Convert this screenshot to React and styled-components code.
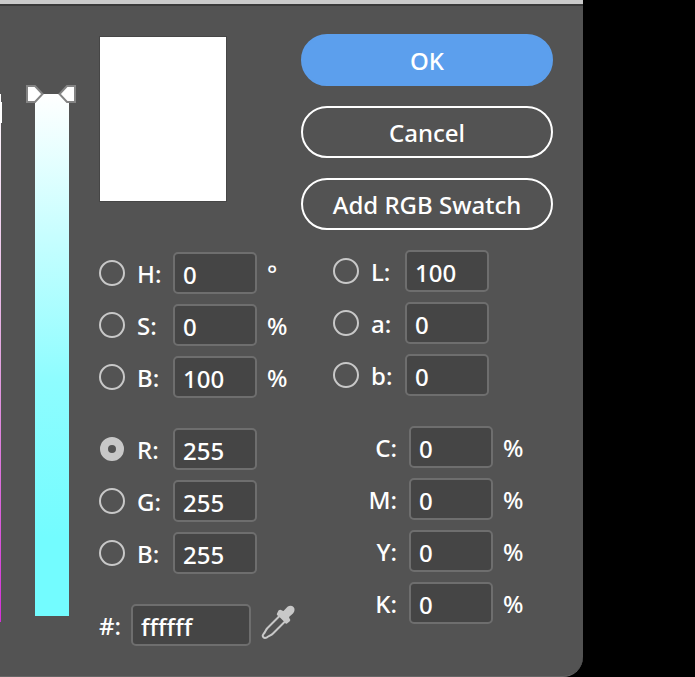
import { useState } from "react";
import styled, { createGlobalStyle } from "styled-components";

const HSB = [
  { id: "hue", label: "H:", value: "0", unit: "°" },
  { id: "saturation", label: "S:", value: "0", unit: "%" },
  { id: "brightness", label: "B:", value: "100", unit: "%" },
];

const RGB = [
  { id: "red", label: "R:", value: "255" },
  { id: "green", label: "G:", value: "255" },
  { id: "blue", label: "B:", value: "255" },
];

const LAB = [
  { id: "lightness", label: "L:", value: "100" },
  { id: "lab-a", label: "a:", value: "0" },
  { id: "lab-b", label: "b:", value: "0" },
];

const CMYK = [
  { id: "cyan", label: "C:", value: "0", unit: "%" },
  { id: "magenta", label: "M:", value: "0", unit: "%" },
  { id: "yellow", label: "Y:", value: "0", unit: "%" },
  { id: "black", label: "K:", value: "0", unit: "%" },
];

const RadioFields = ({ fields, channel, setChannel, narrow }) => (
  <Group>
    {fields.map((field) => (
      <RadioRow key={field.id} $narrow={narrow}>
        <Radio
          type="radio"
          name="channel"
          id={`${field.id}-radio`}
          aria-label={field.id}
          checked={channel === field.id}
          onChange={() => setChannel(field.id)}
        />
        <Label htmlFor={field.id}>{field.label}</Label>
        <TextInput id={field.id} defaultValue={field.value} />
        {field.unit && <Unit>{field.unit}</Unit>}
      </RadioRow>
    ))}
  </Group>
);

const Handle = () => (
  <svg width="18" height="18" viewBox="0 0 18 18">
    <path
      d="M1 1H9L16.500 9L9 17H1Z"
      fill="#fff"
      stroke="#848484"
      strokeWidth="2"
    />
  </svg>
);

const Eyedropper = () => (
  <svg width="34" height="34" viewBox="0 0 34 34">
    <path
      d="M18.500 11L6.500 23C4.500 25 4.500 27 2.500 29C.5 31.500 3 34 6 32.300C8 30.500 10 30.500 12 28.500L24 16.500"
      fill="none"
      stroke="#c8c8c8"
      strokeWidth="2"
    />
    <path
      d="M17.500 5.500C18.500 4.500 20 4.500 21 5.500L22.500 6L26.500 1.800C28.500 .3 31 .5 32.500 2C34 3.500 34 6.500 32 8.500L28 12L28.500 13.500C29.500 14.500 29.500 15.500 28.500 16.500L26 18.500C25 19 24 18.500 23.500 17L17.500 11C16 10.500 15.500 9.500 16 8.500Z"
      fill="#c8c8c8"
    />
  </svg>
);

const App = () => {
  const [channel, setChannel] = useState("red");

  return (
    <>
      <GlobalStyle />
      <Dialog>
        <ColorField>
          <FieldMarker />
        </ColorField>
        <Slider>
          <Handles>
            <Handle />
            <Handle />
          </Handles>
        </Slider>
        <LeftColumn>
          <Swatch />
          <RadioFields fields={HSB} channel={channel} setChannel={setChannel} />
          <RadioFields fields={RGB} channel={channel} setChannel={setChannel} />
          <HexRow>
            <Label htmlFor="hex">#:</Label>
            <TextInput id="hex" defaultValue="ffffff" $wide />
            <IconButton aria-label="Eyedropper">
              <Eyedropper />
            </IconButton>
          </HexRow>
        </LeftColumn>
        <RightColumn>
          <Buttons>
            <Button $primary>OK</Button>
            <Button>Cancel</Button>
            <Button>Add RGB Swatch</Button>
          </Buttons>
          <RightFields>
            <RadioFields
              fields={LAB}
              channel={channel}
              setChannel={setChannel}
              narrow
            />
            <Group>
              {CMYK.map((field) => (
                <CmykRow key={field.id}>
                  <Label htmlFor={field.id}>{field.label}</Label>
                  <TextInput id={field.id} defaultValue={field.value} />
                  <Unit>{field.unit}</Unit>
                </CmykRow>
              ))}
            </Group>
          </RightFields>
        </RightColumn>
      </Dialog>
    </>
  );
};

const GlobalStyle = createGlobalStyle`
  * {
    box-sizing: border-box;
  }

  body {
    margin: 0;
    background: #000;
    color: #fff;
    font-family: "Noto Sans", "Open Sans", sans-serif;
    font-size: 24px;
    font-weight: 500;
    line-height: 32px;
  }

  input,
  button {
    font: inherit;
    color: inherit;
  }
`;

const Dialog = styled.main`
  display: flex;
  margin-right: 112px;
  padding: 28px 30px 30px 0;
  background: #535353;
  border-top: 4px solid #cbcbcb;
  border-bottom: 1px solid #666;
  border-bottom-right-radius: 20px;
  box-shadow: inset 0 2px 0 #3a3a3a;
`;

const ColorField = styled.div`
  position: relative;
  width: 1px;
  height: 528px;
  margin-top: 62px;
  background: linear-gradient(#fff, #e3a5e0 50%, #d42fd8);
`;

const FieldMarker = styled.div`
  position: absolute;
  top: 8px;
  left: 0;
  width: 2px;
  height: 21px;
  background: #fff;
`;

const Slider = styled.div`
  position: relative;
  flex: none;
  width: 34px;
  height: 522px;
  margin: 62px 30px 0 34px;
  background: linear-gradient(#fff, #8efdff 55%, #73fcff 85%);
`;

const Handles = styled.div`
  position: absolute;
  top: -9px;
  left: -9px;
  right: -7px;
  display: flex;
  justify-content: space-between;

  svg:last-child {
    transform: scaleX(-1);
  }
`;

const LeftColumn = styled.div`
  display: flex;
  flex-direction: column;
  gap: 30px;
  flex: none;
  width: 202px;
  padding-top: 4px;
`;

const Swatch = styled.div`
  width: 128px;
  height: 166px;
  margin-bottom: 20px;
  background: #fff;
  border: 1px solid #464646;
`;

const RightColumn = styled.div`
  flex: 1;
  min-width: 252px;
  padding-top: 2px;
`;

const Buttons = styled.div`
  display: flex;
  flex-direction: column;
  gap: 20px;
`;

const Button = styled.button`
  height: 52px;
  padding: 2px 0 0;
  border: 2px solid ${(props) => (props.$primary ? "#5c9fed" : "#fff")};
  border-radius: 26px;
  background: ${(props) => (props.$primary ? "#5c9fed" : "transparent")};
  cursor: pointer;
`;

const RightFields = styled.div`
  display: flex;
  flex-direction: column;
  gap: 30px;
  padding: 20px 0 0 32px;
`;

const Group = styled.div`
  display: flex;
  flex-direction: column;
  gap: 10px;
`;

const RadioRow = styled.div`
  display: grid;
  grid-template-columns: 38px ${(props) => (props.$narrow ? "34px" : "36px")} 84px auto;
  justify-content: start;
  align-items: center;
`;

const CmykRow = styled.div`
  display: grid;
  grid-template-columns: 76px 84px auto;
  justify-content: start;
  align-items: center;

  label {
    padding-right: 12px;
    text-align: right;
  }
`;

const HexRow = styled.div`
  display: flex;
  align-items: center;

  label {
    width: 32px;
  }
`;

const Label = styled.label`
  padding-top: 2px;
`;

const Unit = styled.span`
  padding: 2px 0 0 10px;
`;

const Radio = styled.input`
  appearance: none;
  width: 26px;
  height: 26px;
  margin: 0;
  border: 2px solid #c8c8c8;
  border-radius: 50%;

  &:checked {
    width: 24px;
    height: 24px;
    margin: 1px;
    border-width: 8px;
  }
`;

const TextInput = styled.input`
  width: ${(props) => (props.$wide ? "120px" : "84px")};
  height: 42px;
  padding: 2px 8px 0;
  background: #454545;
  border: 2px solid #6e6e6e;
  border-radius: 5px;
  outline: none;
`;

const IconButton = styled.button`
  display: flex;
  margin-left: 10px;
  padding: 0 0 6px;
  background: none;
  border: none;
  cursor: pointer;
`;

export default App;
